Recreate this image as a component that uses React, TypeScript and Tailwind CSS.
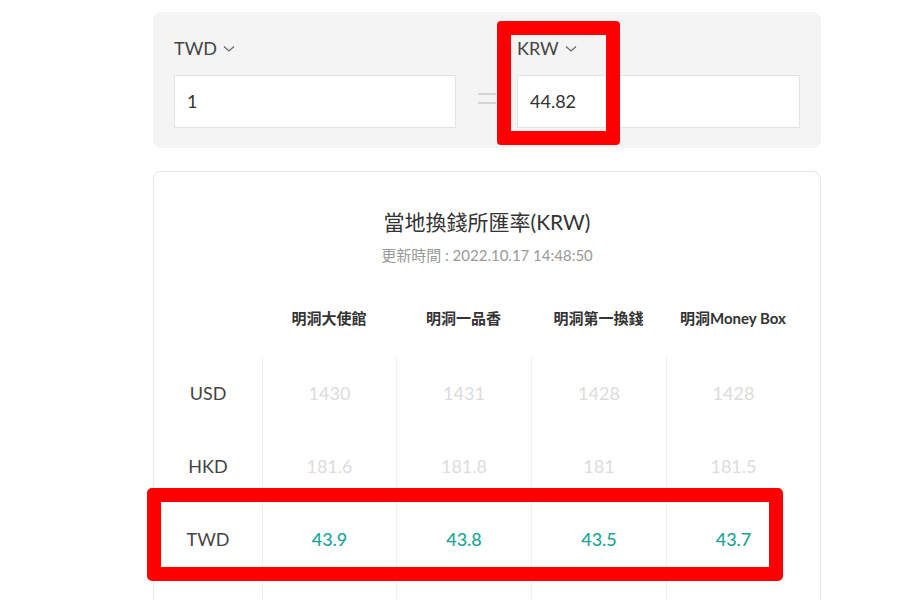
import React from "react";

const font = { fontFamily: 'Lato, "Noto Sans CJK TC", "Noto Sans", sans-serif' };

function Chevron() {
  return (
    <svg width="12" height="8" viewBox="0 0 12 8" className="ml-[6px] mt-[1px]">
      <path d="M1 1.5 L6 6 L11 1.5" fill="none" stroke="#666" strokeWidth="1.2" />
    </svg>
  );
}

const shops = ["明洞大使館", "明洞一品香", "明洞第一換錢", "明洞Money Box"];
const rows = [
  { c: "USD", v: ["1430", "1431", "1428", "1428"], hi: false },
  { c: "HKD", v: ["181.6", "181.8", "181", "181.5"], hi: false },
  { c: "TWD", v: ["43.9", "43.8", "43.5", "43.7"], hi: true },
];

export default function App() {
  return (
    <div className="relative w-[900px] h-[600px] overflow-hidden bg-white" style={font}>
      <div className="ml-[153px] w-[668px] pt-[12px]">
        {/* converter panel */}
        <div className="bg-[#f4f4f4] rounded-[8px] h-[136px] pl-[21px] pr-[21px] pt-[26px] flex items-start">
          <div className="flex flex-col w-[282px]">
            <div className="flex items-center h-[20px] text-[18px] text-[#444]">
              TWD <Chevron />
            </div>
            <div className="mt-[17px] h-[53px] bg-white border border-[#e3e3e3] flex items-center pl-[12px] text-[18px] text-[#333]">
              1
            </div>
          </div>
          <div className="w-[61px] h-[53px] mt-[37px] flex items-center justify-center">
            <div className="flex flex-col gap-[7px] w-[18px] -mt-[6px]">
              <div className="h-[2px] bg-[#d4d4d4]" />
              <div className="h-[2px] bg-[#d4d4d4]" />
            </div>
          </div>
          <div className="flex flex-col w-[283px]">
            <div className="flex items-center h-[20px] text-[18px] text-[#444]">
              KRW <Chevron />
            </div>
            <div className="mt-[17px] h-[53px] bg-white border border-[#e3e3e3] flex items-center pl-[12px] text-[18px] text-[#333]">
              44.82
            </div>
          </div>
        </div>

        {/* rates card */}
        <div className="mt-[23px] border border-[#e6e6e6] rounded-[8px] h-[460px]">
          <div className="text-center pt-[36px] text-[21px] leading-[28px] text-[#333]">當地換錢所匯率(KRW)</div>
          <div className="text-center mt-[9px] text-[15px] leading-[20px] text-[#999]">更新時間 : 2022.10.17 14:48:50</div>
          <div className="mt-[14px] grid grid-cols-[108px_134px_135px_135px_134px]">
            <div className="h-[78px]" />
            {shops.map((s) => (
              <div key={s} className="h-[78px] flex items-center justify-center text-[15px] font-bold text-[#333] whitespace-nowrap">
                {s}
              </div>
            ))}
            {rows.map((r) => (
              <React.Fragment key={r.c}>
                <div className="h-[73px] flex items-center justify-center text-[18px] text-[#444]">{r.c}</div>
                {r.v.map((v, i) => (
                  <div
                    key={i}
                    className={`h-[73px] flex items-center justify-center text-[18px] border-l border-[#f0f0f0] ${
                      r.hi ? "text-[#1aa596] font-medium" : "text-[#dcdcdc]"
                    }`}
                  >
                    {v}
                  </div>
                ))}
              </React.Fragment>
            ))}
            <div className="h-[40px]" />
            {[0, 1, 2, 3].map((i) => (
              <div key={i} className="h-[40px] border-l border-[#f0f0f0]" />
            ))}
          </div>
        </div>
      </div>

      {/* red annotation boxes */}
      <div className="absolute left-[497px] top-[21px] w-[123px] h-[124px] border-[14px] border-[#ff0000] rounded-[4px]" />
      <div className="absolute left-[147px] top-[488px] w-[636px] h-[93px] border-[14px] border-[#ff0000] rounded-[5px]" />
    </div>
  );
}
